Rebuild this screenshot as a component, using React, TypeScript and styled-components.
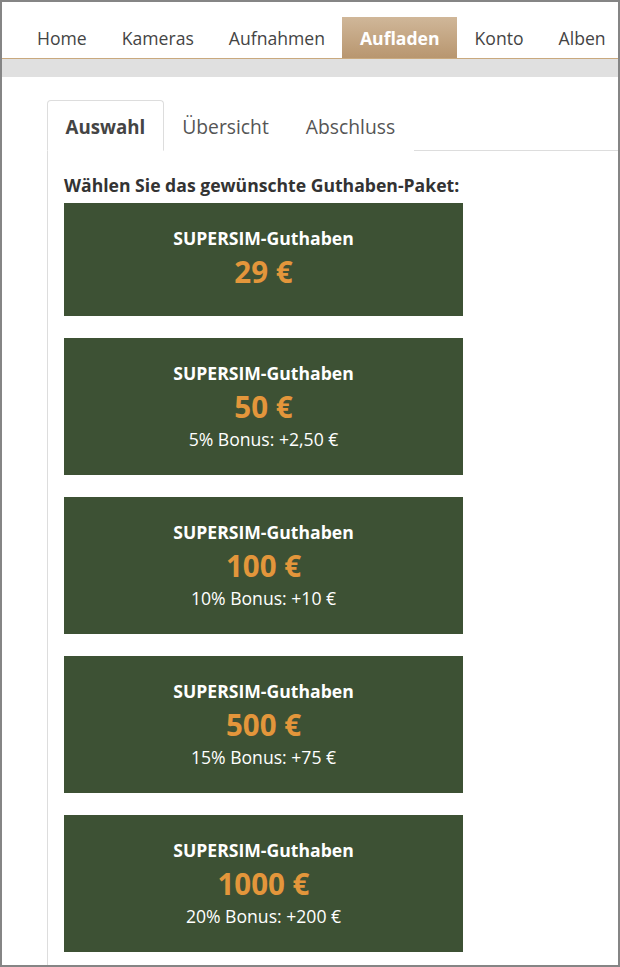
import styled, { createGlobalStyle } from "styled-components";

const GlobalStyle = createGlobalStyle`
  html, body {
    margin: 0;
    padding: 0;
    background: #ffffff;
  }
  body {
    font-family: "Open Sans", "Noto Sans", sans-serif;
  }
`;

const Frame = styled.div`
  width: 620px;
  height: 967px;
  box-sizing: border-box;
  border: 2px solid #858585;
  overflow: hidden;
  background: #ffffff;
`;

const Nav = styled.ul`
  display: flex;
  margin: 0;
  padding: 15px 0 0 17.5px;
  list-style: none;
  border-bottom: 1px solid #c9a97e;
`;

const NavItem = styled.li<{ $active?: boolean }>`
  padding: 0 17.5px;
  height: 41px;
  line-height: 42px;
  font-size: 17.6px;
  white-space: nowrap;
  color: ${(props) => (props.$active ? "#ffffff" : "#444444")};
  font-weight: ${(props) => (props.$active ? 700 : 400)};
  background: ${(props) =>
    props.$active ? "linear-gradient(#d0b799, #b8966f)" : "transparent"};
`;

const Band = styled.div`
  height: 18px;
  background: #e0e0e0;
`;

const Content = styled.div`
  padding: 23px 0 0 45px;
`;

const TabBar = styled.div`
  display: flex;
  border-bottom: 1px solid #dddddd;
`;

const Tab = styled.div<{ $active?: boolean }>`
  padding: 13px 17.5px 10px;
  line-height: 26px;
  font-size: ${(props) => (props.$active ? "18.7px" : "19.3px")};
  margin-bottom: -1px;
  border: 1px solid ${(props) => (props.$active ? "#dddddd" : "transparent")};
  border-bottom-color: ${(props) => (props.$active ? "#ffffff" : "transparent")};
  border-radius: 4px 4px 0 0;
  background: #ffffff;
  color: ${(props) => (props.$active ? "#444444" : "#555555")};
  font-weight: ${(props) => (props.$active ? 700 : 400)};
`;

const Panel = styled.div`
  border-left: 1px solid #dddddd;
  padding: 22px 0 0 16px;
  height: 900px;
`;

const Heading = styled.h3`
  margin: 0 0 5px;
  font-size: 17.6px;
  line-height: 25px;
  font-weight: 700;
  color: #333333;
`;

const Card = styled.div`
  width: 399px;
  box-sizing: border-box;
  padding: 23px 10px 24px;
  margin-bottom: 22px;
  background: #3d5134;
  color: #ffffff;
  text-align: center;
`;

const CardTitle = styled.div`
  font-size: 17.6px;
  line-height: 25px;
  font-weight: 700;
`;

const Price = styled.div`
  margin: 4px 0;
  font-size: 29.5px;
  line-height: 33px;
  font-weight: 700;
  color: #e3963b;
`;

const Bonus = styled.div`
  font-size: 17.6px;
  line-height: 24px;
`;

interface IPackage {
  amount: string;
  bonus?: string;
}

const packages: IPackage[] = [
  { amount: "29 €" },
  { amount: "50 €", bonus: "5% Bonus: +2,50 €" },
  { amount: "100 €", bonus: "10% Bonus: +10 €" },
  { amount: "500 €", bonus: "15% Bonus: +75 €" },
  { amount: "1000 €", bonus: "20% Bonus: +200 €" },
];

const navItems = ["Home", "Kameras", "Aufnahmen", "Aufladen", "Konto", "Alben"];

function App() {
  return (
    <Frame>
      <GlobalStyle />
      <Nav>
        {navItems.map((item) => (
          <NavItem key={item} $active={item === "Aufladen"}>
            {item}
          </NavItem>
        ))}
      </Nav>
      <Band />
      <Content>
        <TabBar>
          <Tab $active>Auswahl</Tab>
          <Tab>Übersicht</Tab>
          <Tab>Abschluss</Tab>
        </TabBar>
        <Panel>
          <Heading>Wählen Sie das gewünschte Guthaben-Paket:</Heading>
          {packages.map((p) => (
            <Card key={p.amount}>
              <CardTitle>SUPERSIM-Guthaben</CardTitle>
              <Price>{p.amount}</Price>
              {p.bonus && <Bonus>{p.bonus}</Bonus>}
            </Card>
          ))}
        </Panel>
      </Content>
    </Frame>
  );
}

export default App;
